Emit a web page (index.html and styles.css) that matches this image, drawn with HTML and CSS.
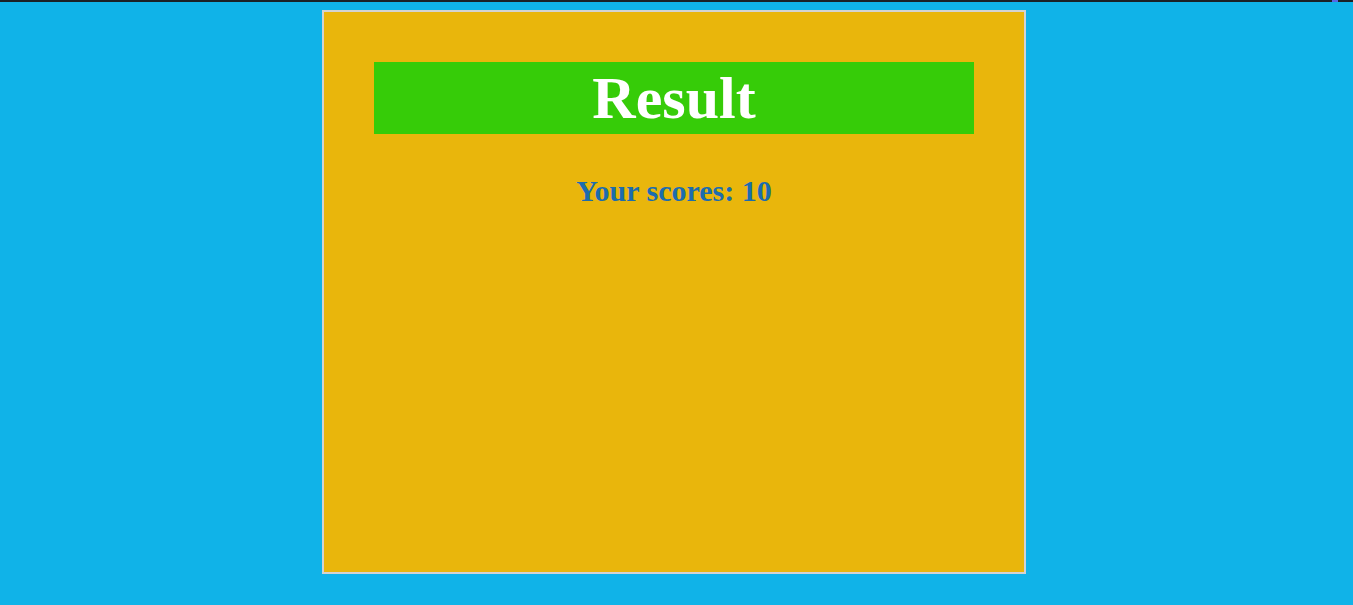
FILE: index.html
```html
<!DOCTYPE html>
<html lang="en">
<head>
<meta charset="utf-8">
<title>Result</title>
<link rel="stylesheet" href="styles.css">
</head>
<body>
<div class="topbar"><span class="topbar-mark"></span></div>
<div class="stage">
  <div class="card">
    <h1 class="title">Result</h1>
    <p class="score">Your scores: 10</p>
  </div>
</div>
</body>
</html>
```

FILE: styles.css
```css
html, body {
  margin: 0;
  padding: 0;
}
body {
  background: #10b3e8;
  font-family: "Liberation Serif", "Times New Roman", serif;
  height: 605px;
  overflow: hidden;
}
.topbar {
  height: 2px;
  background: #1b2126;
  display: flex;
  justify-content: flex-end;
  padding-right: 15px;
}
.topbar-mark {
  width: 6px;
  height: 2px;
  background: #5566e6;
}
.stage {
  width: 1348px;
  display: flex;
  justify-content: center;
  padding-top: 8px;
}
.card {
  width: 600px;
  height: 460px;
  padding: 50px;
  background: #e9b60c;
  border: 2px solid #d3d3d3;
}
.title {
  margin: 0;
  height: 72px;
  line-height: 72px;
  background: #36cc08;
  color: #ffffff;
  text-align: center;
  font-size: 60px;
  font-weight: bold;
}
.score {
  margin: 40px 0 0;
  text-align: center;
  color: #1c6cae;
  font-size: 30px;
  font-weight: bold;
}
```
